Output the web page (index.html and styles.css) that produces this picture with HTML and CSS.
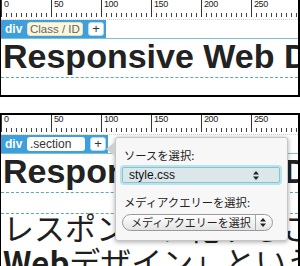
FILE: index.html
```html
<!DOCTYPE html>
<html lang="ja">
<head>
    <meta charset="UTF-8">
    <meta name="viewport" content="width=device-width, initial-scale=1.0">
    <title>Selector editor</title>
    <link rel="stylesheet" href="styles.css">
</head>
<body>
    <div class="shot shot-first">
        <div class="ruler">
            <span class="mark">0</span>
            <span class="mark">50</span>
            <span class="mark">100</span>
            <span class="mark">150</span>
            <span class="mark">200</span>
            <span class="mark">250</span>
        </div>
        <div class="guide"></div>
        <div class="toolbar">
            <div class="tag">
                <span class="tag-name">div</span>
                <span class="field field-empty">Class / ID</span>
                <span class="add">+</span>
            </div>
        </div>
        <h1 class="title">Responsive Web Design</h1>
    </div>

    <div class="shot shot-second">
        <div class="ruler">
            <span class="mark">0</span>
            <span class="mark">50</span>
            <span class="mark">100</span>
            <span class="mark">150</span>
            <span class="mark">200</span>
            <span class="mark">250</span>
        </div>
        <div class="guide"></div>
        <div class="toolbar">
            <div class="tag">
                <span class="tag-name">div</span>
                <span class="field">.section</span>
                <span class="add">+</span>
            </div>
        </div>
        <h1 class="title">Responsive Web Design</h1>
        <div class="guide guide-dashed"></div>
        <p class="lead">レスポンシブ化することを<br><b>Web</b>デザイン」という</p>

        <!-- popup over the page -->
        <div class="popup">
            <div class="popup-label">ソースを選択:</div>
            <div class="select select-focus">
                <span class="select-text">style.css</span>
                <svg class="updown" width="6" height="9" viewBox="0 0 6 9"><path d="M3 0L6 3.5H0Z M3 9L0 5.5H6Z" fill="#222"/></svg>
            </div>
            <div class="popup-label">メディアクエリーを選択:</div>
            <div class="select select-pill">
                <span class="select-text">メディアクエリーを選択</span>
                <svg class="updown" width="6" height="9" viewBox="0 0 6 9"><path d="M3 0L6 3.5H0Z M3 9L0 5.5H6Z" fill="#222"/></svg>
            </div>
        </div>
    </div>
</body>
</html>
```

FILE: styles.css
```css
body {
    margin: 0;
    background: #fff;
    font-family: "Liberation Sans", Arial, sans-serif;
    color: #222;
}

.shot {
    position: relative;
    border-left: 1px solid #000;
    border-right: 2px solid #000;
    overflow: hidden;
}

.shot-first {
    height: 95px;
    border-bottom: 2px solid #000;
}

.shot-second {
    margin-top: 16px;
    height: 151px;
    border-top: 2px solid #000;
}

.ruler {
    display: flex;
    height: 17px;
    overflow: hidden;
    background-image: repeating-linear-gradient(to right, #444 0 1px, transparent 1px 5px);
    background-size: 100% 4px;
    background-position: left bottom;
    background-repeat: no-repeat;
}

.mark {
    flex: none;
    box-sizing: border-box;
    width: 50px;
    height: 17px;
    padding-left: 2px;
    border-left: 1px solid #333;
    font-size: 9px;
    line-height: 9px;
    letter-spacing: -0.4px;
    color: #222;
    background: linear-gradient(#fff, #fff) no-repeat left top / 100% 12px;
}

.guide {
    margin-top: 2px;
    border-top: 1px dotted #d4d4d4;
}

.toolbar {
    display: flex;
    height: 18px;
    border-bottom: 1px solid #7cc4cd;
}

.tag {
    display: flex;
    align-items: center;
    gap: 5px;
    padding: 0 2px 0 4px;
    background: #3d9fdb;
}

.tag-name {
    width: 17px;
    color: #fff;
    font-weight: bold;
    font-size: 12px;
}

.field {
    box-sizing: border-box;
    width: 58px;
    height: 14px;
    padding-left: 3px;
    border-radius: 3px;
    background: #fff;
    font-size: 12px;
    line-height: 14px;
    white-space: nowrap;
    overflow: hidden;
    color: #333;
}

.field-empty {
    width: 56px;
    padding-left: 2px;
    background: #fbf6dc;
    border: 1px solid #e7e0b8;
    font-size: 11.5px;
    line-height: 12px;
    color: #666;
}

.add {
    box-sizing: border-box;
    width: 16px;
    height: 14px;
    border: 1px solid #b7dcef;
    border-radius: 3px;
    background: #fff;
    text-align: center;
    font-size: 13px;
    line-height: 11px;
    color: #333;
}

.title {
    margin: 0;
    padding: 0 0 4px 2px;
    border-bottom: 1px dashed #5aa9b4;
    font-size: 34px;
    line-height: 34px;
    font-weight: bold;
    white-space: nowrap;
    color: #222;
}

.guide-dashed {
    margin-top: 20px;
    border-top: 1px dashed #5aa9b4;
}

.lead {
    margin: -4px 0 0;
    padding-left: 2px;
    font-family: "Noto Sans CJK JP", sans-serif;
    font-size: 31px;
    line-height: 34px;
    white-space: nowrap;
    color: #1e1e1e;
}

.popup {
    position: absolute;
    left: 114px;
    top: 22px;
    box-sizing: border-box;
    width: 173px;
    height: 104px;
    padding: 10px 8px 0 6px;
    background: #f7f7f7;
    border: 1px solid #c6c6c6;
    border-radius: 3px;
    box-shadow: 0 1px 5px rgba(0, 0, 0, 0.35);
}

.popup::before {
    content: "";
    position: absolute;
    left: -10px;
    top: 4px;
    border-top: 7px solid transparent;
    border-bottom: 7px solid transparent;
    border-right: 9px solid #cfcfcf;
}

.popup-label {
    padding-left: 2px;
    font-family: "Noto Sans CJK JP", sans-serif;
    font-size: 11.3px;
    line-height: 15px;
    color: #222;
}

.select {
    display: flex;
    align-items: center;
    box-sizing: border-box;
    height: 16px;
    margin: 4px 0 12px;
}

.select-focus {
    width: 158px;
    padding: 0 6px;
    background: #dce7ea;
    border: 1px solid #86c5d6;
    border-radius: 2px;
    box-shadow: 0 0 0 2px rgba(140, 210, 228, 0.55);
}

.select-focus .select-text {
    flex: 1;
    font-size: 12px;
    color: #111;
}

.select-focus .updown {
    margin-right: 14px;
}

.select-pill {
    width: 151px;
    height: 17px;
    padding: 0 6px 0 8px;
    background: linear-gradient(#ffffff, #e4e4e4);
    border: 1px solid #9a9a9a;
    border-radius: 9px;
}

.select-pill .select-text {
    flex: 1;
    overflow: hidden;
    white-space: nowrap;
    margin-right: 4px;
    padding-right: 2px;
    border-right: 1px solid #aaa;
    font-family: "Noto Sans CJK JP", sans-serif;
    font-size: 11px;
    line-height: 15px;
    color: #222;
}
```
